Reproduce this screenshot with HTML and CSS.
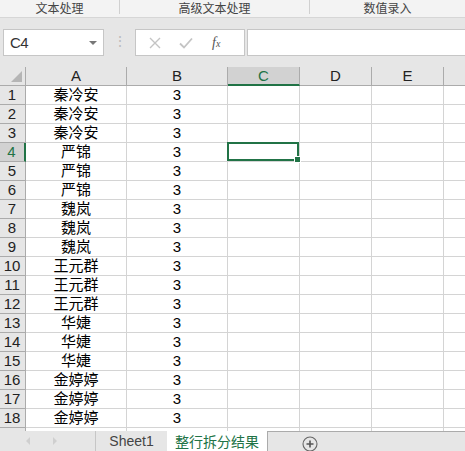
FILE: index.html
```html
<!DOCTYPE html>
<html lang="zh">
<head>
<meta charset="utf-8">
<link rel="stylesheet" href="styles.css">
</head>
<body>
<div class="app">
  <div class="ribbon">
    <div class="grp g1">文本处理</div>
    <div class="grp g2">高级文本处理</div>
    <div class="grp g3">数值录入</div>
  </div>
  <div class="fbar">
    <div class="namebox"><span class="nb-text">C4</span><span class="nb-arrow"></span></div>
    <div class="dots">⋮</div>
    <div class="fbtns">
      <svg class="ic" width="14" height="14" viewBox="0 0 14 14"><path d="M2 2 L12 12 M12 2 L2 12" stroke="#c4c4c4" stroke-width="1.4" fill="none"/></svg>
      <svg class="ic" width="16" height="14" viewBox="0 0 16 14"><path d="M2 7.5 L6 11.5 L14 2.5" stroke="#c4c4c4" stroke-width="1.8" fill="none"/></svg>
      <span class="fx"><i>f</i><i class="x">x</i></span>
    </div>
    <div class="finput"></div>
  </div>
  <div class="sheet" id="sheet">
    <div class="corner"><span class="tri"></span></div>
    <div class="ch">A</div>
    <div class="ch">B</div>
    <div class="ch sel">C</div>
    <div class="ch">D</div>
    <div class="ch">E</div>
    <div class="ch last"></div>
  </div>
  <div class="tabs">
    <div class="navs">
      <svg width="8" height="10" viewBox="0 0 8 10"><path d="M6 1 L2 5 L6 9 Z" fill="#cfcfcf"/></svg>
      <svg width="8" height="10" viewBox="0 0 8 10"><path d="M2 1 L6 5 L2 9 Z" fill="#cfcfcf"/></svg>
    </div>
    <div class="tab">Sheet1</div>
    <div class="tab active">整行拆分结果</div>
    <div class="tabrest">
      <svg class="plus" width="16" height="16" viewBox="0 0 16 16"><circle cx="8" cy="8" r="7" stroke="#666" stroke-width="1.1" fill="none"/><path d="M8 4.5 V11.5 M4.5 8 H11.5" stroke="#555" stroke-width="1.6"/></svg>
    </div>
  </div>
</div>
<script src="app.js"></script>
</body>
</html>
```
FILE: app.js
```js
(function(){
  var names=["秦冷安","秦冷安","秦冷安","严锦","严锦","严锦","魏岚","魏岚","魏岚","王元群","王元群","王元群","华婕","华婕","华婕","金婷婷","金婷婷","金婷婷"];
  var s=document.getElementById('sheet');
  var html='';
  for(var i=0;i<19;i++){
    var r=i+1;
    var has=i<18;
    html+='<div class="rh'+(r===4?' sel':'')+'">'+(has?r:'')+'</div>';
    html+='<div class="c">'+(has?names[i]:'')+'</div>';
    html+='<div class="c">'+(has?'3':'')+'</div>';
    html+='<div class="c">'+(r===4?'<span class="selbox"><span class="handle"></span></span>':'')+'</div>';
    html+='<div class="c"></div><div class="c"></div><div class="c last"></div>';
  }
  s.insertAdjacentHTML('beforeend',html);
})();
```
FILE: styles.css
```css
html,body{margin:0;padding:0;}
body{font-family:"Liberation Sans","Noto Sans CJK SC",sans-serif;background:#fff;overflow:hidden;}
.app{width:465px;height:451px;overflow:hidden;position:relative;display:flex;flex-direction:column;}
.ribbon{height:17px;border-bottom:1px solid #d6d6d6;background:#f3f3f3;display:flex;flex-shrink:0;}
.grp{font-family:"Noto Sans CJK SC",sans-serif;font-size:12px;line-height:15px;color:#444;text-align:center;height:14px;}
.g1{width:119px;border-right:1px solid #d0d0d0;}
.g2{width:189px;border-right:1px solid #d0d0d0;}
.g3{flex:1;}
.fbar{height:49px;background:#e6e6e6;display:flex;align-items:flex-start;padding-top:11px;box-sizing:border-box;flex-shrink:0;}
.namebox{margin-left:3px;height:25px;border:1px solid #c6c6c6;background:#fff;display:flex;align-items:center;justify-content:space-between;padding:0 6px 0 6px;box-sizing:content-box;width:87px;}
.nb-text{font-family:"Liberation Sans",sans-serif;font-size:15px;color:#333;letter-spacing:-0.5px;}
.nb-arrow{width:0;height:0;border-left:4px solid transparent;border-right:4px solid transparent;border-top:4px solid #777;}
.dots{width:31px;text-align:center;color:#bbb;font-size:14px;line-height:25px;height:27px;}
.fbtns{width:108px;height:25px;border:1px solid #c6c6c6;background:#fff;display:flex;align-items:center;}
.fbtns .ic{margin-left:12px;}
.fbtns .ic + .ic{margin-left:16px;}
.fx{margin-left:18px;font-family:"Liberation Serif",serif;font-size:14px;color:#555;}
.fx .x{font-size:10px;}
.finput{margin-left:2px;flex:1;height:25px;border:1px solid #c6c6c6;border-right:none;background:#fff;}
.sheet{display:grid;grid-template-columns:26px 101px 101px 72px 72px 72px 21px;grid-auto-rows:19px;flex:1;overflow:hidden;align-content:start;}
.corner{background:#e6e6e6;border-right:1px solid #ababab;border-bottom:1px solid #ababab;position:relative;}
.tri{position:absolute;right:3px;bottom:3px;width:0;height:0;border-left:11px solid transparent;border-bottom:11px solid #b5b5b5;}
.ch{background:#e6e6e6;border-right:1px solid #ababab;border-bottom:1px solid #ababab;font-size:15px;line-height:18px;text-align:center;color:#222;box-sizing:border-box;}
.ch.sel{background:#d2d2d2;border-bottom:2px solid #217346;color:#217346;}
.ch.last{border-right:none;}
.rh{background:#e6e6e6;border-right:1px solid #ababab;border-bottom:1px solid #ababab;font-size:15px;line-height:18px;text-align:center;color:#222;box-sizing:border-box;padding-right:1px;}
.rh.sel{background:#d2d2d2;border-right:2px solid #217346;color:#217346;}
.c{border-right:1px solid #d4d4d4;border-bottom:1px solid #d4d4d4;box-sizing:border-box;font-size:15px;line-height:18px;text-align:center;color:#000;font-family:"Liberation Sans","Noto Sans CJK SC",sans-serif;position:relative;}
.c.last{border-right:none;}
.selbox{position:absolute;left:-1px;top:-1px;width:72px;height:19px;border:2px solid #217346;box-sizing:border-box;z-index:2;}
.handle{position:absolute;right:-4px;bottom:-4px;width:5px;height:5px;background:#217346;border:1px solid #fff;}
.tabs{height:20px;background:#e6e6e6;display:flex;flex-shrink:0;position:relative;}
.navs{width:96px;display:flex;align-items:center;gap:19px;padding-left:24px;box-sizing:border-box;border-right:1px solid #c6c6c6;}
.tab{width:71px;text-align:center;font-size:14px;line-height:20px;color:#444;}
.tab.active{width:100px;background:#fff;color:#217346;font-family:"Noto Sans CJK SC",sans-serif;font-size:14px;line-height:20px;}
.tabrest{flex:1;border-top:1px solid #ababab;border-left:1px solid #ababab;position:relative;}
.plus{position:absolute;left:34px;top:4px;}
```
